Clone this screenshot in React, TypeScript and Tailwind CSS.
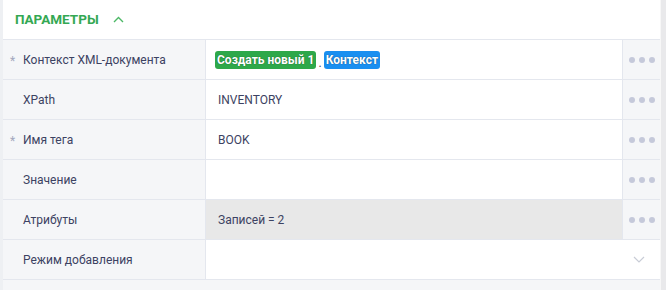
const rows = [
  { label: "Контекст XML-документа", req: true, kind: "badges" },
  { label: "XPath", req: false, kind: "text", value: "INVENTORY" },
  { label: "Имя тега", req: true, kind: "text", value: "BOOK" },
  { label: "Значение", req: false, kind: "text", value: "" },
  { label: "Атрибуты", req: false, kind: "grey", value: "Записей = 2" },
  { label: "Режим добавления", req: false, kind: "select", value: "" },
];

function Dots() {
  return (
    <div className="flex items-center gap-[4px]">
      <span className="w-[6px] h-[6px] rounded-full bg-[#c5c9da]" />
      <span className="w-[6px] h-[6px] rounded-full bg-[#c5c9da]" />
      <span className="w-[6px] h-[6px] rounded-full bg-[#c5c9da]" />
    </div>
  );
}

export default function App() {
  return (
    <div className="w-[666px] h-[290px] flex bg-white overflow-hidden font-['Roboto',sans-serif] text-[12px] text-[#3c4262]">
      <div className="w-[3px] bg-[#eef0f3]" />
      <div className="flex-1 flex flex-col bg-[#f5f6f8]">
        {/* заголовок секции */}
        <div className="h-[39px] bg-white flex items-center pl-[12px] gap-[14px]">
          <span className="font-bold text-[13.5px] text-[#34a853]">ПАРАМЕТРЫ</span>
          <svg width="11" height="7" viewBox="0 0 11 7" fill="none">
            <path d="M1 6L5.5 1.5L10 6" stroke="#4cb866" strokeWidth="1.4" />
          </svg>
        </div>
        <div className="flex flex-col border-t border-[#e4e7ee]">
          {rows.map((r) => (
            <div key={r.label} className="h-[40px] flex border-b border-[#e4e7ee]">
              <div className="w-[202px] flex items-center pl-[7px]">
                <span className="w-[13px] text-[#a3a8bd] text-[12px] leading-none translate-y-[1px]">{r.req ? "*" : ""}</span>
                <span>{r.label}</span>
              </div>
              {r.kind === "select" ? (
                <div className="flex-1 bg-white border-l border-[#e4e7ee] flex items-center justify-end pr-[15px]">
                  <svg width="12" height="7" viewBox="0 0 12 7" fill="none">
                    <path d="M1 1L6 6L11 1" stroke="#c8ccd6" strokeWidth="1.2" />
                  </svg>
                </div>
              ) : (
                <>
                  <div
                    className={
                      r.kind === "grey"
                        ? "flex-1 border-l border-[#e4e7ee] flex items-center pl-[12px] bg-[#e8e8e8]"
                        : "flex-1 border-l border-[#e4e7ee] flex items-center pl-[12px] bg-white"
                    }
                  >
                    {r.kind === "badges" ? (
                      <div className="flex items-center -ml-[3px] [text-shadow:0_0_1px_rgba(0,0,0,0.6)]">
                        <span className="bg-[#2ea84a] text-white font-bold text-[12px] rounded-[3px] px-[2px] leading-[18px]">
                          Создать новый 1
                        </span>
                        <span className="text-[#3c4262] px-[2px] self-end leading-[12px] [text-shadow:none]">.</span>
                        <span className="bg-[#1a8ff0] text-white font-bold text-[12px] rounded-[3px] px-[2px] leading-[18px]">
                          Контекст
                        </span>
                      </div>
                    ) : (
                      <span>{r.value}</span>
                    )}
                  </div>
                  <div className="w-[38px] border-l border-[#e4e7ee] bg-[#f5f6f8] flex items-center justify-center">
                    <Dots />
                  </div>
                </>
              )}
            </div>
          ))}
        </div>
      </div>
      <div className="w-[6px] bg-[#e9e9eb] border-l border-[#f7f7f7]" />
    </div>
  );
}
